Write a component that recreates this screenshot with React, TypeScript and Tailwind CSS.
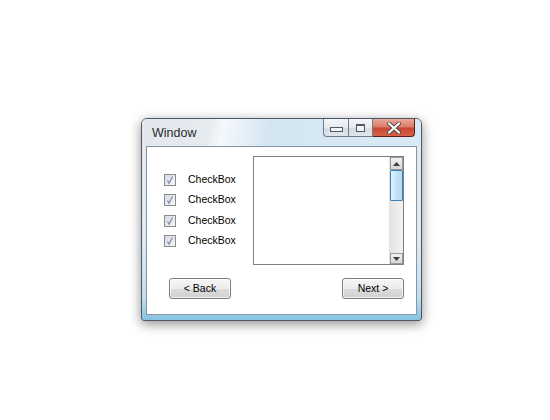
import React from "react";

const font = { fontFamily: '"Liberation Sans", Arial, sans-serif' };

function Check() {
  return (
    <div className="w-[12px] h-[12px] border border-[#8a8c8f] bg-[linear-gradient(135deg,#d9dcdf,#f4f5f6)] flex items-center justify-center">
      <svg width="10" height="10" viewBox="0 0 10 10">
        <path d="M2.5 5.5 L4 8.2 L7.5 1.5" fill="none" stroke="#7f90b6" strokeWidth="1.3" />
      </svg>
    </div>
  );
}

function Row() {
  return (
    <div className="h-[20.33px] flex items-center">
      <Check />
      <span className="ml-[12px] text-[10.5px] text-black" style={font}>CheckBox</span>
    </div>
  );
}

function Btn({ label, w }: { label: string; w: string }) {
  return (
    <div
      className={`${w} h-[21px] rounded-[3px] border border-[#7b7b7b] bg-[linear-gradient(to_bottom,#f6f6f6_0%,#ececec_50%,#dcdcdc_51%,#d0d0d0_100%)] flex items-center justify-center text-[10.5px] text-black shadow-[inset_0_0_0_1px_rgba(255,255,255,0.7)]`}
      style={font}
    >
      {label}
    </div>
  );
}

export default function App() {
  return (
    <div className="w-[550px] h-[420px] bg-white pt-[118px] pl-[141px]">
      <div className="w-[281px] h-[203px] rounded-t-[6px] rounded-b-[3px] border border-[#4d5863] shadow-[0_3px_12px_rgba(0,0,0,0.45)] flex flex-col bg-[linear-gradient(to_bottom,#e5eaef_0%,#e0e9f1_60%,#c4def0_88%,#86c3e3_100%)] overflow-hidden">
        <div className="h-[27px] flex items-start bg-[linear-gradient(100deg,#e2e7ed_0%,#e6ebf0_24%,#f4f8fb_29%,#eef4f9_33%,#d5e6f3_45%,#d9e9f6_100%)]">
          <div className="pl-[10px] pt-[5px] text-[12.5px] text-[#2a2a2a]" style={font}>
            Window
          </div>
          <div className="ml-auto mr-[6px] flex h-[18px]">
            <div className="w-[26px] h-[18px] border border-[#6e7b88] border-t-0 rounded-bl-[4px] bg-[linear-gradient(to_bottom,#f5f7f9_0%,#e6eaef_50%,#d4dbe3_51%,#dfe6ed_100%)] flex items-end justify-center pb-[4px]">
              <div className="w-[13px] h-[5px] border border-[#4f5a66] bg-[#f2f4f6]" />
            </div>
            <div className="w-[24px] h-[18px] border border-l-0 border-[#6e7b88] border-t-0 bg-[linear-gradient(to_bottom,#f5f7f9_0%,#e6eaef_50%,#d4dbe3_51%,#dfe6ed_100%)] flex items-center justify-center">
              <div className="w-[9px] h-[8px] border border-t-[2px] border-[#4f5a66] bg-[#f2f4f6]" />
            </div>
            <div className="w-[42px] h-[18px] border border-l-0 border-t-0 border-[#5a1e16] rounded-br-[4px] bg-[linear-gradient(to_bottom,#e9a898_0%,#dc7a66_48%,#c9452f_52%,#d8614a_100%)] flex items-center justify-center">
              <svg width="16" height="12" viewBox="0 0 16 12">
                <path d="M3 1.5 L13 10.5 M13 1.5 L3 10.5" stroke="#4a4a4a" strokeWidth="4" strokeLinecap="round" />
                <path d="M3 1.5 L13 10.5 M13 1.5 L3 10.5" stroke="#ffffff" strokeWidth="2.2" strokeLinecap="round" />
              </svg>
            </div>
          </div>
        </div>
        <div className="mx-[4px] mb-[5px] flex-1 border border-[#8795a3] bg-white flex flex-col pt-[9px] pr-[12px]">
          <div className="flex">
            <div className="pl-[17px] flex flex-col justify-center">
              <Row />
              <Row />
              <Row />
              <Row />
            </div>
            <div className="ml-auto w-[151px] h-[109px] border border-[#7f7f7f] flex justify-end">
              <div className="w-[14px] h-full bg-[linear-gradient(to_right,#e4e4e4,#f2f2f2)] flex flex-col border-l border-[#e0e0e0]">
                <div className="h-[13px] border border-[#9a9a9a] bg-[linear-gradient(to_bottom,#f2f2f2,#d6d6d6)] flex items-center justify-center">
                  <svg width="7" height="4" viewBox="0 0 7 4">
                    <path d="M0 4 L3.5 0 L7 4 Z" fill="#3c3c3c" />
                  </svg>
                </div>
                <div className="h-[31px] border border-[#3c7fb1] rounded-[1px] bg-[linear-gradient(to_right,#e3f2fc,#c4e3f8_50%,#b3daf5)]" />
                <div className="flex-1" />
                <div className="h-[11px] border border-[#9a9a9a] bg-[linear-gradient(to_bottom,#f2f2f2,#d6d6d6)] flex items-center justify-center">
                  <svg width="7" height="4" viewBox="0 0 7 4">
                    <path d="M0 0 L7 0 L3.5 4 Z" fill="#3c3c3c" />
                  </svg>
                </div>
              </div>
            </div>
          </div>
          <div className="flex justify-between pl-[22px] mt-[13px]">
            <Btn label="< Back" w="w-[62px]" />
            <Btn label="Next >" w="w-[62px]" />
          </div>
        </div>
      </div>
    </div>
  );
}
